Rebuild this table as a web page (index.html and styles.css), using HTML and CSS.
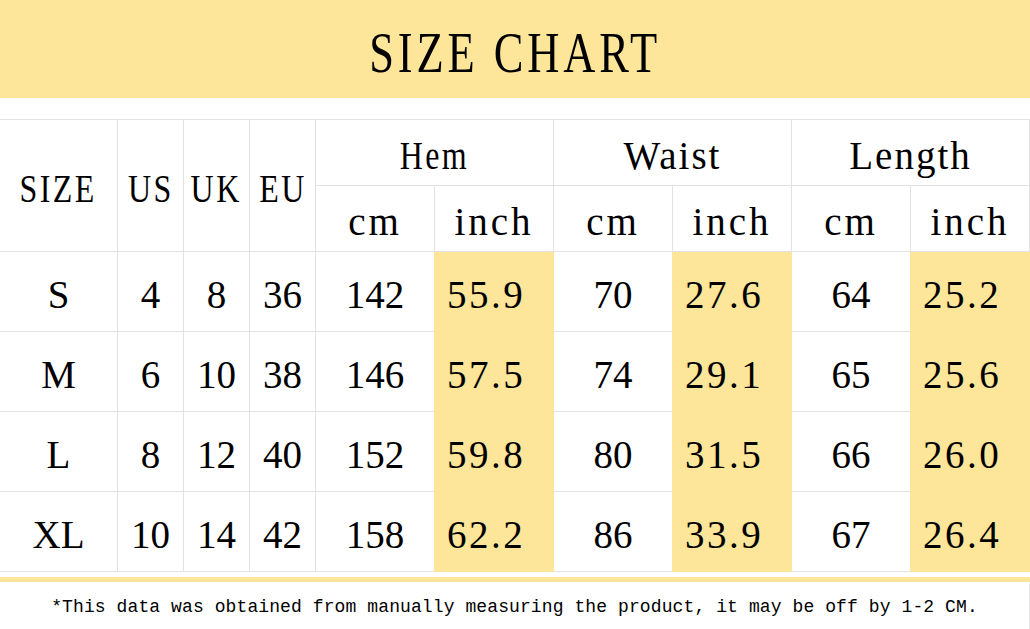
FILE: index.html
```html
<!DOCTYPE html>
<html>
<head>
<meta charset="utf-8">
<link rel="stylesheet" href="styles.css">
</head>
<body>
<header class="banner"><h1 class="title"><span class="squeeze">SIZE CHART</span></h1></header>
<main class="chart">
  <table class="sizes">
    <colgroup>
      <col class="c-size"><col class="c-sm"><col class="c-sm"><col class="c-sm">
      <col class="c-m"><col class="c-m"><col class="c-m"><col class="c-m"><col class="c-m"><col class="c-m">
    </colgroup>
    <thead>
      <tr class="head1">
        <th rowspan="2" class="first"><span class="narrow">SIZE</span></th>
        <th rowspan="2"><span class="narrow">US</span></th>
        <th rowspan="2"><span class="narrow">UK</span></th>
        <th rowspan="2"><span class="narrow">EU</span></th>
        <th colspan="2" class="group"><span class="narrow">Hem</span></th>
        <th colspan="2" class="group">Waist</th>
        <th colspan="2" class="group">Length</th>
      </tr>
      <tr class="head2">
        <th class="unit">cm</th><th class="unit">inch</th>
        <th class="unit">cm</th><th class="unit">inch</th>
        <th class="unit">cm</th><th class="unit">inch</th>
      </tr>
    </thead>
    <tbody>
      <tr>
        <td class="first">S</td><td>4</td><td>8</td><td>36</td>
        <td class="cm">142</td><td class="in">55.9</td>
        <td class="cm">70</td><td class="in">27.6</td>
        <td class="cm">64</td><td class="in">25.2</td>
      </tr>
      <tr>
        <td class="first">M</td><td>6</td><td>10</td><td>38</td>
        <td class="cm">146</td><td class="in">57.5</td>
        <td class="cm">74</td><td class="in">29.1</td>
        <td class="cm">65</td><td class="in">25.6</td>
      </tr>
      <tr>
        <td class="first">L</td><td>8</td><td>12</td><td>40</td>
        <td class="cm">152</td><td class="in">59.8</td>
        <td class="cm">80</td><td class="in">31.5</td>
        <td class="cm">66</td><td class="in">26.0</td>
      </tr>
      <tr>
        <td class="first">XL</td><td>10</td><td>14</td><td>42</td>
        <td class="cm">158</td><td class="in">62.2</td>
        <td class="cm">86</td><td class="in">33.9</td>
        <td class="cm">67</td><td class="in">26.4</td>
      </tr>
    </tbody>
  </table>
  <div class="rule"></div>
  <p class="note">*This data was obtained from manually measuring the product, it may be off by 1-2 CM.</p>
</main>
</body>
</html>
```

FILE: styles.css
```css
* { box-sizing: border-box; }
html, body { margin: 0; padding: 0; background: #ffffff; }
body {
  width: 1030px;
  height: 629px;
  overflow: hidden;
  font-family: "Liberation Serif", "Times New Roman", serif;
  color: #000;
}
.banner {
  height: 98px;
  background: #fde599;
  display: flex;
  align-items: center;
  justify-content: center;
}
.title {
  margin: 6px 0 0 0;
  font-weight: normal;
  font-size: 57px;
  line-height: 1;
}
.squeeze {
  display: inline-block;
  letter-spacing: 5px;
  transform: scaleX(0.78);
}
.chart {
  padding-top: 21px;
}
.sizes {
  border-collapse: separate;
  border-spacing: 0;
  table-layout: fixed;
  width: 1030px;
  border-top: 1px solid #e2e2e2;
}
.c-size { width: 118px; }
.c-sm { width: 66px; }
.c-m { width: 119px; }
.sizes th, .sizes td {
  font-weight: normal;
  font-size: 39px;
  text-align: center;
  vertical-align: middle;
  padding: 6px 0 0 0;
  border-right: 1px solid #e2e2e2;
  border-bottom: 1px solid #e2e2e2;
  line-height: 1;
  white-space: nowrap;
}
.narrow {
  display: inline-block;
  letter-spacing: 3px;
  transform: scaleX(0.82);
}
.head1 th { height: 66px; }
.head1 th[rowspan] { height: 132px; }
.head2 th { height: 66px; }
.group { padding-top: 0; letter-spacing: 2px; }
.unit { letter-spacing: 3px; padding-top: 8px; }
.sizes td { height: 80px; }
.sizes td.cm { border-right-color: #fde599; }
.sizes td.in {
  background: #fde599;
  border-color: #fde599;
  text-align: left;
  padding-left: 12px;
  letter-spacing: 2.5px;
}
.rule {
  height: 5px;
  margin-top: 5px;
  background: #fde599;
}
.note {
  margin: 0;
  height: 47px;
  padding-top: 15px;
  text-align: center;
  font-family: "Liberation Mono", "Courier New", monospace;
  font-size: 18px;
  letter-spacing: 0.1px;
  border-right: 1px solid #ececec;
}
```
